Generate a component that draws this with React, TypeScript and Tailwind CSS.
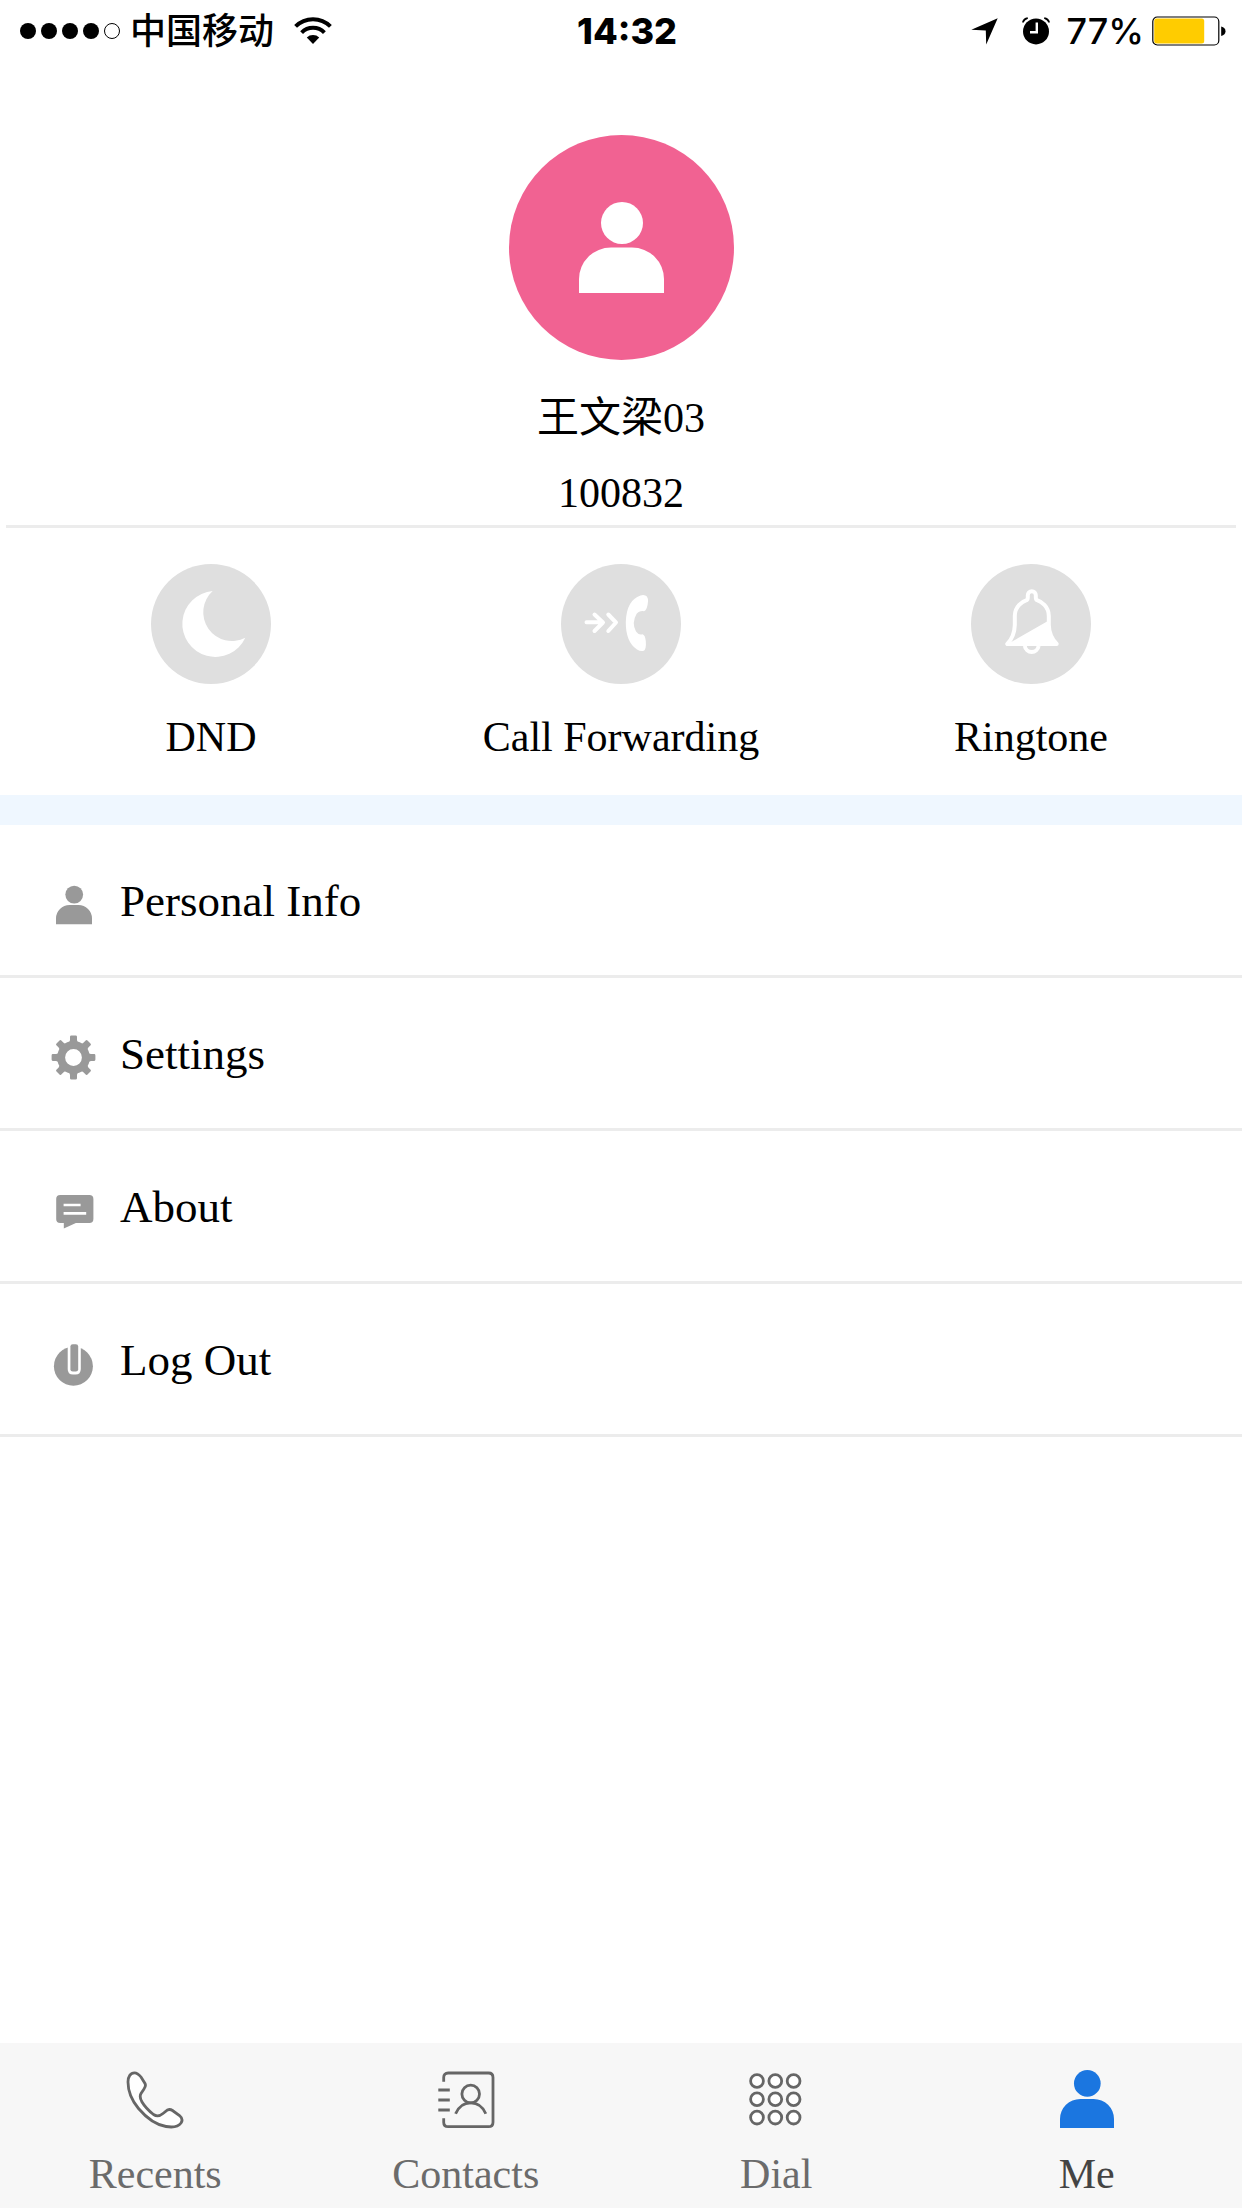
// "Me" tab of the softphone app

import React from "react";

type IconProps = { className?: string };

const UserShape = ({ className }: IconProps) => (
    <svg viewBox="0 0 85 91" className={className} fill="currentColor" aria-hidden="true">
        <circle cx="43" cy="21" r="21" />
        <path d="M0 91V77A32 31.5 0 0 1 32 45.5H53A32 31.5 0 0 1 85 77V91Z" />
    </svg>
);

const UserIcon = () => (
    <span className="flex size-[45px] items-center justify-center">
        <UserShape className="h-10 w-9" />
    </span>
);

const GearIcon = () => (
    <svg viewBox="0 0 45 45" className="size-[45px]" fill="currentColor" aria-hidden="true">
        {[0, 45, 90, 135].map((deg) => (
            <g key={deg} transform={`rotate(${deg} 22.5 22.5)`}>
                <path d="M16.5 9Q19 7.5 19 5V1.8Q19 .6 20.4 .6H24.6Q26 .6 26 1.8V5Q26 7.5 28.5 9Z" />
                <path d="M16.5 36Q19 37.5 19 40V43.2Q19 44.4 20.4 44.4H24.6Q26 44.4 26 43.2V40Q26 37.5 28.5 36Z" />
            </g>
        ))}
        <circle cx="22.5" cy="22.5" r="12.4" fill="none" stroke="currentColor" strokeWidth="8" />
    </svg>
);

const MessageIcon = () => (
    <svg viewBox="0 0 45 45" className="size-[45px]" fill="currentColor" aria-hidden="true">
        <rect x="5.2" y="7" width="37.2" height="28" rx="4" />
        <path d="M12.8 34V40.6L26 34.5Z" />
        <path d="M12.6 17H29.6M12.6 25.3H35.2" stroke="#fff" strokeWidth="2.7" />
    </svg>
);

const PowerIcon = () => (
    <svg viewBox="0 0 45 45" className="size-[45px]" fill="currentColor" aria-hidden="true">
        <circle cx="22.4" cy="25.2" r="19.5" />
        <path d="M16.7 0H29.8V28Q29.8 33.6 24.5 33.6H22Q16.7 33.6 16.7 28Z" fill="#fff" />
        <rect x="19.4" y="3.2" width="7.8" height="27.4" rx="2.4" />
    </svg>
);

const MoonIcon = () => (
    <svg viewBox="0 0 120 120" className="size-full" fill="#fff" aria-hidden="true">
        <path d="M61.7 27A33 33 0 1 0 94.3 73.7A28.7 28.7 0 0 1 61.7 27Z" />
    </svg>
);

const ForwardIcon = () => (
    <svg viewBox="0 0 120 120" className="size-full" fill="#fff" aria-hidden="true">
        <path
            d="M25.5 58.3H41M33.5 50.5L42 58.5L33.5 67M47.3 50.5L55 58.5L47.3 67"
            fill="none"
            stroke="#fff"
            strokeWidth="4"
            strokeLinecap="round"
            strokeLinejoin="round"
        />
        <path d="M79.5 31.4Q87.3 29.6 87 37.5Q86.4 46 83 47.2Q78 46.6 75.5 50Q70.3 59 75 67.6Q77.5 71.3 81.5 70.2Q84.2 71 84.8 77Q85.6 86.5 82 87Q79 87.4 76 85.5Q64.6 78 64.8 58Q65.4 36 79.5 31.4Z" />
    </svg>
);

const BellIcon = () => (
    <svg viewBox="0 0 120 120" className="size-full" fill="none" stroke="#fff" strokeWidth="4" strokeLinejoin="round" aria-hidden="true">
        <path d="M36.3 80H85.7C80 74 78 69 77.8 61V52C77.8 42 70 37.5 66 36.2Q64.8 35.6 64.8 33V31.2A4 4 0 0 0 56.8 31.2V33Q56.8 35.6 55.6 36.2C51.6 37.5 43.8 42 43.8 52V61C43.6 69 42 74 36.3 80Z" />
        <path d="M53.8 82A7 7.2 0 0 0 67.6 82" />
        <path d="M42 77L77.8 56.5V61C78 69 80 74 85.7 80H37Z" fill="#fff" stroke="none" />
    </svg>
);

const PhoneIcon = () => (
    <svg viewBox="0 0 60 60" className="size-[60px]" fill="#fff" stroke="#666" strokeWidth="2.8" aria-hidden="true">
        <path d="M9.5 2.8C12 2.8 14 4.5 16 7L20 13.5C21 15.5 20.5 17 19 19L16 23.5C14.5 26 15 28.5 17 32C20 37 24 41 28.5 44.5C31.5 46.5 35 46 38 43.5L42.5 40C44.5 39 46 39.5 47.5 40.5L54.5 45.5C57.5 48 58 50 56 53C53.5 56.5 47 57.5 41 56.5C32 55 22 48.5 13.5 38.5C6 29.5 3 20 3 12C3 6.5 5.5 2.8 9.5 2.8Z" />
    </svg>
);

const ContactsIcon = () => (
    <svg viewBox="0 0 60 60" className="size-[60px]" fill="none" stroke="#666" strokeWidth="2.8" aria-hidden="true">
        <path d="M7.7 11.8V7.5Q7.7 3 12.2 3H52.5Q57 3 57 7.5V52.2Q57 56.7 52.5 56.7H12.2Q7.7 56.7 7.7 52.2V48.2" />
        <path d="M2.3 20H13.8M2.3 30H13.8M2.3 40H13.8" strokeWidth="3" />
        <circle cx="34.7" cy="24" r="8.8" />
        <path d="M19.6 43.8Q24 32.8 34.7 32.8T49.8 43.8" />
    </svg>
);

const DialIcon = () => (
    <svg viewBox="0 0 60 60" className="size-[60px]" fill="#fff" stroke="#666" strokeWidth="2.8" aria-hidden="true">
        {[11, 29.3, 47.6].map((cy) =>
            [11, 29.3, 47.6].map((cx) => <circle key={`${cx}-${cy}`} cx={cx} cy={cy} r="6.4" />)
        )}
    </svg>
);

const MeIcon = () => (
    <span className="flex h-[60px] w-[60px] items-start justify-center text-[#1b76e0]">
        <UserShape className="h-[58px] w-[54px]" />
    </span>
);

const WifiIcon = () => (
    <svg viewBox="0 0 38 28" className="h-7 w-[38px]" fill="none" stroke="#000" strokeWidth="4" aria-hidden="true">
        <path d="M1.6 9.4A24.6 24.6 0 0 1 36.4 9.4" />
        <path d="M7.6 15.6A16 16 0 0 1 30.4 15.6" />
        <path d="M12.8 20.6A9 9 0 0 1 25.2 20.6L19 27Z" fill="#000" stroke="none" />
    </svg>
);

const LocationIcon = () => (
    <svg viewBox="0 0 27 27" className="size-[27px]" aria-hidden="true">
        <path d="M26.7 .3L15.2 26.5L14.8 12.4L.3 11.8Z" />
    </svg>
);

const AlarmIcon = () => (
    <svg viewBox="0 0 28 28" className="size-7" aria-hidden="true">
        <circle cx="14" cy="14.4" r="13" />
        <path d="M0 5.2Q1.2 .8 5.6 .2L6 1.8Q3 3 1.4 5.8ZM28 5.2Q26.8 .8 22.4 .2L22 1.8Q25 3 26.6 5.8Z" />
        <path d="M14.8 5.5V15.2H8" fill="none" stroke="#fff" strokeWidth="2.4" />
    </svg>
);

const BatteryIcon = () => (
    <svg viewBox="0 0 74 30" className="h-[30px] w-[74px]" aria-hidden="true">
        <rect x=".8" y="1" width="66" height="28" rx="4.5" fill="#fff" stroke="#000" strokeWidth="1.2" />
        <rect x="2.2" y="2.4" width="50" height="25.2" rx="2.5" fill="#fc0" />
        <path d="M69.2 10.5Q73.5 11.5 73.5 15.2T69.2 20Z" />
    </svg>
);

const actions = [
    { label: "DND", icon: <MoonIcon /> },
    { label: "Call Forwarding", icon: <ForwardIcon /> },
    { label: "Ringtone", icon: <BellIcon /> },
];

const menu = [
    { label: "Personal Info", icon: <UserIcon /> },
    { label: "Settings", icon: <GearIcon /> },
    { label: "About", icon: <MessageIcon /> },
    { label: "Log Out", icon: <PowerIcon /> },
];

const tabs = [
    { label: "Recents", icon: <PhoneIcon /> },
    { label: "Contacts", icon: <ContactsIcon /> },
    { label: "Dial", icon: <DialIcon /> },
    { label: "Me", icon: <MeIcon />, active: true },
];

const StatusBar = () => (
    <div className="grid h-[62px] grid-cols-[1fr_auto_1fr] items-center pl-5 pr-4 font-['Inter','Noto_Sans_CJK_SC',sans-serif] text-[36px] leading-[60px]">
        <div className="flex items-center">
            {/* signal strength */}
            <div className="mr-2.5 flex gap-[5px]">
                {[1, 2, 3, 4, 5].map((n) => (
                    <span
                        key={n}
                        className={n < 5 ? "size-4 rounded-full bg-black" : "size-4 rounded-full border border-black"}
                    />
                ))}
            </div>
            <span className="mr-5 font-medium">中国移动</span>
            <WifiIcon />
        </div>
        <span className="pl-2 font-extrabold">14:32</span>
        <div className="flex items-center justify-end">
            <LocationIcon />
            <span className="ml-6 mr-4"><AlarmIcon /></span>
            <span className="mr-2 font-medium">77%</span>
            <BatteryIcon />
        </div>
    </div>
);

const App = () => {
    return (
        <div className="flex min-h-screen flex-col bg-white font-['Liberation_Serif','Noto_Sans_CJK_SC',serif] text-black">
            <StatusBar />
            <main>
                {/* profile */}
                <section className="mx-1.5 flex flex-col items-center border-b-[3px] border-[#ececec] pb-2 pt-[73px] text-[42px] leading-[48px]">
                    <div className="mb-[34px] flex size-[225px] items-center justify-center rounded-full bg-[#f16292] text-white">
                        <UserShape className="h-[91px] w-[85px]" />
                    </div>
                    <h1>王文梁03</h1>
                    <p className="mt-[27px]">100832</p>
                </section>

                {/* quick actions */}
                <section className="grid grid-cols-3 border-b-[30px] border-[#eff7ff] px-1.5 pb-[34px] pt-9">
                    {actions.map((action) => (
                        <button key={action.label} type="button" className="flex flex-col items-center gap-[29px] text-[42px] leading-[48px]">
                            <span className="size-[120px] rounded-full bg-[#dfdfdf]">{action.icon}</span>
                            {action.label}
                        </button>
                    ))}
                </section>

                <ul>
                    {menu.map((item) => (
                        <li key={item.label} className="border-b-[3px] border-[#ececec]">
                            <button type="button" className="flex h-[150px] w-full items-center gap-6 px-[51px] pt-0.5 text-[45px] leading-[48px]">
                                <span className="mt-[7px] text-[#999]">{item.icon}</span>
                                {item.label}
                            </button>
                        </li>
                    ))}
                </ul>
            </main>

            <nav className="mt-auto grid grid-cols-4 bg-[#f7f7f7] pb-2.5 pt-[27px]">
                {tabs.map((tab) => (
                    <a
                        key={tab.label}
                        href={`#${tab.label.toLowerCase()}`}
                        className={`flex flex-col items-center gap-5 text-[42px] leading-[48px] ${tab.active ? "text-[#444]" : "text-[#6b6b6b]"}`}
                    >
                        {tab.icon}
                        {tab.label}
                    </a>
                ))}
            </nav>
        </div>
    );
};

export default App;
